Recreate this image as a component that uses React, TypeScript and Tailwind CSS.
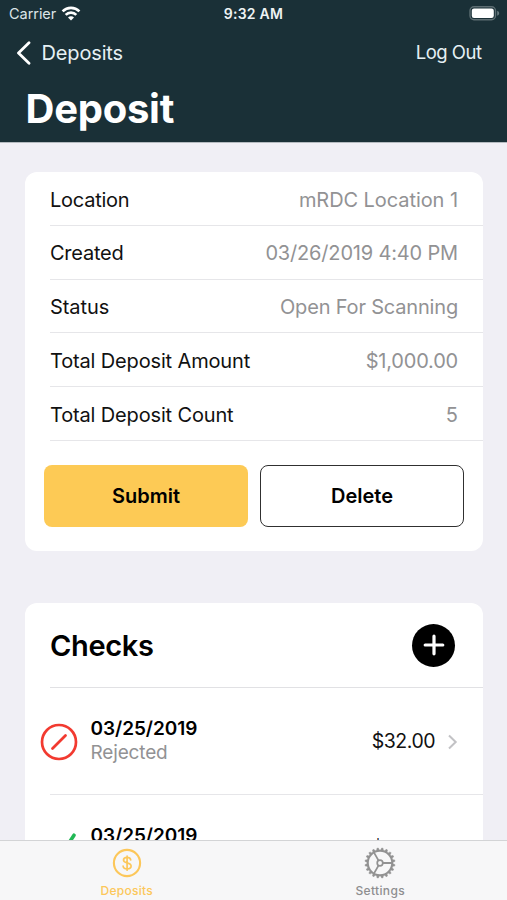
import type { ReactNode } from "react";

const details = [
  { label: "Location", value: "mRDC Location 1", labelClass: "tracking-[-0.250px]", valueClass: "tracking-[-0.070px]" },
  { label: "Created", value: "03/26/2019 4:40 PM", labelClass: "tracking-[-0.250px]", valueClass: "tracking-[-0.170px]" },
  { label: "Status", value: "Open For Scanning", labelClass: "tracking-[-0.050px]", valueClass: "tracking-[-0.180px]" },
  { label: "Total Deposit Amount", value: "$1,000.00", labelClass: "tracking-[-0.150px]", valueClass: "tracking-[-0.200px]" },
  { label: "Total Deposit Count", value: "5", labelClass: "tracking-[-0.150px]", valueClass: "tracking-[0px]" },
];

function WifiIcon() {
  return (
    <svg className="h-[15px] w-5" viewBox="0 0 20 15" fill="none" stroke="#fff" strokeWidth="2.700">
      <path d="M1.6 5.400a12 12 0 0 1 16.8 0" />
      <path d="M4.700 8.900a7.500 7.500 0 0 1 10.600 0" />
      <path d="M10 14.400 7 11.400a4.250 4.250 0 0 1 6 0z" fill="#fff" stroke="none" />
    </svg>
  );
}

function BatteryIcon() {
  return (
    <svg className="h-[15px] w-[31px]" viewBox="0 0 31 15" fill="none">
      <rect x="1" y="0.750" width="25.500" height="13" rx="4" stroke="#5d6d72" strokeWidth="1.400" />
      <rect x="2.800" y="2.600" width="22" height="9.300" rx="2.200" fill="#fff" />
      <path d="M28.200 4.800v5c1.300-.5 2-1.400 2-2.500s-.7-2-2-2.500z" fill="#68797e" />
    </svg>
  );
}

function RejectedIcon() {
  return (
    <svg className="size-[38px]" viewBox="0 0 38 38" fill="none" stroke="#f23a30" strokeLinecap="round">
      <circle cx="19" cy="19" r="17" strokeWidth="2.700" />
      <path d="m12.500 25.500 13-13" strokeWidth="2.800" />
    </svg>
  );
}

function AcceptedIcon() {
  return (
    <svg className="size-[38px]" viewBox="0 0 38 38" fill="none" stroke="#21b855" strokeWidth="3.600" strokeLinecap="round" strokeLinejoin="round">
      <path d="M8 24l8 9L34 5.200" />
    </svg>
  );
}

function DollarIcon() {
  return (
    <svg className="size-[30px]" viewBox="0 0 30 30" fill="none" stroke="#fcc75a">
      <circle cx="15" cy="15" r="13.100" strokeWidth="2.100" />
      <path d="M18.700 11.800c-.3-1.500-1.700-2.500-3.600-2.500-2.100 0-3.600 1.100-3.600 2.700 0 1.500 1.100 2.200 3.600 2.800 2.800.6 4 1.500 4 3.200 0 1.800-1.600 2.900-4 2.900-2.300 0-3.900-1.100-4-2.900M15.100 8v14.200" strokeWidth="1.700" strokeLinecap="round" />
    </svg>
  );
}

const teeth = Array.from({ length: 20 }, (_, i) => i * 18 + 9);

function GearIcon() {
  return (
    <svg className="size-8" viewBox="0 0 32 32" fill="none" stroke="#929292">
      <circle cx="16" cy="16" r="12.200" strokeWidth="2" />
      {teeth.map((angle) => (
        <path key={angle} d="M14.600 3.500 15.300 1h1.400l.7 2.500z" fill="#929292" strokeWidth="0.500" transform={`rotate(${angle} 16 16)`} />
      ))}
      <circle cx="16" cy="16" r="2.800" strokeWidth="1.700" />
      <path d="M18.800 16h9.500M14.600 13.600 9.900 5.400M14.600 18.400l-4.700 8.200" strokeWidth="1.800" />
    </svg>
  );
}

function CheckRow({ icon, status, amount }: { icon: ReactNode; status?: string; amount: string }) {
  return (
    <div className="flex h-[107px] items-center pr-[24.500px] pl-[15px]">
      {icon}
      <div className="ml-[12.500px] flex-1 pb-[2px]">
        <div className="text-[19px] leading-6 font-semibold tracking-[-0.050px] text-black">03/25/2019</div>
        <div className="h-6 text-[19px] leading-6 tracking-[-0.150px] text-[#929294]">{status}</div>
      </div>
      <span className="pt-px text-[19.500px] tracking-[-0.500px]">{amount}</span>
      <svg className="ml-3 h-4 w-[11px]" viewBox="0 0 11 16" fill="none" stroke="#c2c2c5" strokeWidth="2">
        <path d="m2 1.500 6.700 6.500L2 14.500" />
      </svg>
    </div>
  );
}

export default function App() {
  return (
    <div className="flex h-[900px] w-[507px] flex-col overflow-hidden bg-[#f0eff5] font-['Inter','Liberation_Sans',sans-serif] text-[#111]">
      <header className="h-[142px] shrink-0 bg-[#1a3037] text-white">
        <div className="grid h-[27px] grid-cols-3 items-center pr-[7px] pl-[9px] text-[14px]">
          <div className="flex items-center gap-[5px] text-[#dce5e8]">
            <span className="text-[14.500px] tracking-[-0.050px]">Carrier</span>
            <WifiIcon />
          </div>
          <span className="-ml-[2px] text-center font-semibold tracking-[0.250px] text-[#eef3f4]">9:32 AM</span>
          <div className="flex justify-end">
            <BatteryIcon />
          </div>
        </div>
        <div className="flex h-[51px] items-center justify-between pr-[25.500px] pl-4 text-[#e6f0f4]">
          <div className="flex items-center gap-[9.500px]">
            <svg className="h-6 w-4" viewBox="0 0 16 24" fill="none" stroke="#fff" strokeWidth="2.800" strokeLinecap="round" strokeLinejoin="round">
              <path d="M13 1.800 2.500 12 13 22.200" />
            </svg>
            <span className="text-[20px] tracking-[-0.150px]">Deposits</span>
          </div>
          <span className="text-[18.500px] tracking-[-0.500px]">Log Out</span>
        </div>
        <h1 className="pl-[25.500px] text-[40px] leading-[61px] font-bold tracking-[-0.250px]">Deposit</h1>
      </header>
      <main className="flex flex-1 flex-col gap-[51.500px] overflow-hidden border-t border-[#b5bbc0] pt-[29px] pr-[24.500px] pl-[25px]">
        <section className="h-[379px] shrink-0 rounded-xl bg-white">
          {details.map((row) => (
            <div key={row.label} className="ml-[25px] flex h-[53.750px] items-center justify-between border-b border-[#e6e6e9] pt-[2.500px] pr-[24.500px] text-[20px]">
              <span className={row.labelClass}>{row.label}</span>
              <span className={`text-[#929294] ${row.valueClass}`}>{row.value}</span>
            </div>
          ))}
          <div className="mt-6 flex gap-3 pl-[19px] text-[20px] font-semibold text-black">
            <button className="h-[62px] w-[204px] rounded-lg bg-[#fdca55]">Submit</button>
            <button className="h-[62px] w-[204px] rounded-lg border border-[#303030]">Delete</button>
          </div>
        </section>
        <section className="h-[400px] shrink-0 rounded-xl bg-white">
          <div className="ml-[25px] flex h-[85.500px] items-center justify-between border-b border-[#e1e1e4] pt-px pr-[27.500px]">
            <h2 className="text-[29px] font-semibold tracking-[-0.350px] text-black">Checks</h2>
            <button className="flex size-[43px] items-center justify-center rounded-full bg-black">
              <svg className="size-[22px]" viewBox="0 0 22 22" stroke="#fff" strokeWidth="3.200" strokeLinecap="round">
                <path d="M11 2.200v17.600M2.200 11h17.600" />
              </svg>
            </button>
          </div>
          <CheckRow icon={<RejectedIcon />} status="Rejected" amount="$32.00" />
          <div className="-mt-px ml-[25px] h-px bg-[#e6e6e9]" />
          <CheckRow icon={<AcceptedIcon />} amount="$32.00" />
        </section>
      </main>
      <nav className="grid h-[60px] shrink-0 grid-cols-2 border-t border-[#d3d4d6] bg-[#f7f7f8] text-[12px] font-medium">
        <div className="flex flex-col items-center pt-[7px] text-[#fcc75a]">
          <DollarIcon />
          <span className="mt-[5px] leading-[15px] tracking-[0.250px]">Deposits</span>
        </div>
        <div className="flex flex-col items-center pt-[6px] text-[#8e8e90]">
          <GearIcon />
          <span className="mt-[4px] leading-[15px] tracking-[0.350px]">Settings</span>
        </div>
      </nav>
    </div>
  );
}
